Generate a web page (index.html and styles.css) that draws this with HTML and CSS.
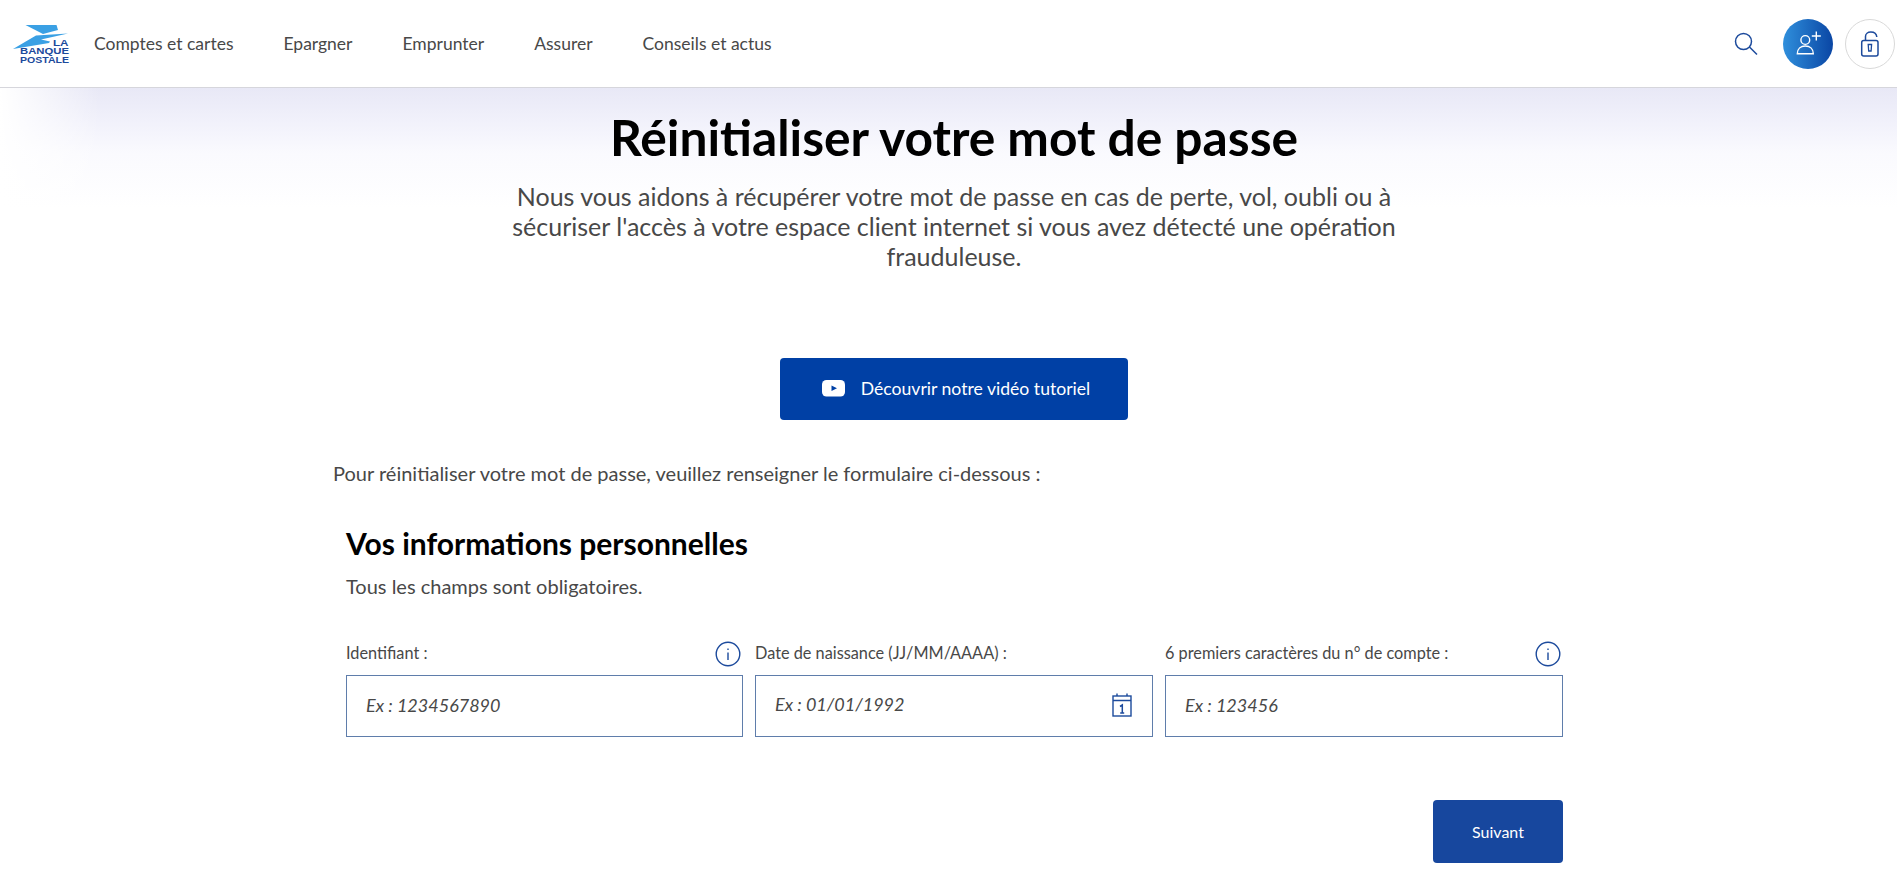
FILE: index.html
```html
<!DOCTYPE html>
<html lang="fr">
<head>
    <meta charset="UTF-8">
    <meta name="viewport" content="width=device-width, initial-scale=1.0">
    <title>Réinitialiser votre mot de passe</title>
    <link rel="stylesheet" href="styles.css">
</head>
<body>
    <!-- Header -->
    <header class="site-header">
        <a class="logo" href="#" aria-label="La Banque Postale">
            <svg width="57" height="42" viewBox="13 24 57 42">
                <path d="M25.5 25H56.5L58 30L43 34Z" fill="#3aa0e4"/>
                <path d="M68 33.5L36 35.5L13 49L49 43L50 41.5L41 39.5Z" fill="#3aa0e4"/>
                <g class="logo-text" fill="#1c4a9c">
                    <text x="53" y="45.5" textLength="15.5" lengthAdjust="spacingAndGlyphs">LA</text>
                    <text x="20" y="54" textLength="49" lengthAdjust="spacingAndGlyphs">BANQUE</text>
                    <text x="20" y="63" textLength="49" lengthAdjust="spacingAndGlyphs">POSTALE</text>
                </g>
            </svg>
        </a>
        <nav class="main-nav">
            <a href="#">Comptes et cartes</a>
            <a href="#">Epargner</a>
            <a href="#">Emprunter</a>
            <a href="#">Assurer</a>
            <a href="#">Conseils et actus</a>
        </nav>
        <div class="header-actions">
            <button class="search-btn" title="Rechercher">
                <svg width="24" height="24" viewBox="0 0 24 24" fill="none" stroke="#1c4a9c" stroke-width="1.5">
                    <circle cx="9.5" cy="9.5" r="8"/>
                    <path d="M15.5 15L23 22.5"/>
                </svg>
            </button>
            <button class="round-btn round-btn-blue" title="Devenir client">
                <svg width="34" height="34" viewBox="0 0 34 34" fill="none" stroke="#fff" stroke-width="1.4">
                    <circle cx="14.3" cy="13" r="4.4"/>
                    <path d="M6.3 26.8C6.3 21.8 9.8 19 14.3 19C18.8 19 22.3 21.8 22.3 26.8Z"/>
                    <path d="M20.8 9H29.8M25.3 4.5V13.5"/>
                </svg>
            </button>
            <button class="round-btn round-btn-white" title="Espace client">
                <svg width="22" height="30" viewBox="0 0 22 30" fill="none" stroke="#1c4a9c" stroke-width="1.5">
                    <rect x="2.7" y="11.5" width="16.3" height="15.5" rx="2"/>
                    <path d="M6.5 11V7.5C6.5 4.8 8.8 3 11.8 3C15 3 17.5 4.5 17.8 8"/>
                    <path d="M9.2 15.5H12.6L12.1 22H9.7Z" stroke-width="1.3"/>
                </svg>
            </button>
        </div>
    </header>

    <main class="page">
        <div class="hero">
            <h1>Réinitialiser votre mot de passe</h1>
            <p class="hero-text">Nous vous aidons à récupérer votre mot de passe en cas de perte, vol, oubli ou à sécuriser l'accès à votre espace client internet si vous avez détecté une opération frauduleuse.</p>
            <a class="video-btn" href="#">
                <svg width="24" height="17" viewBox="0 0 24 17">
                    <rect width="23" height="16.5" rx="4.5" fill="#fff"/>
                    <path d="M9.5 5.5L15 8.2L9.5 11Z" fill="#0040a5"/>
                </svg>
                Découvrir notre vidéo tutoriel
            </a>
        </div>

        <p class="intro">Pour réinitialiser votre mot de passe, veuillez renseigner le formulaire ci-dessous :</p>

        <form class="form-box">
            <h2>Vos informations personnelles</h2>
            <p class="form-note">Tous les champs sont obligatoires.</p>

            <div class="field-row">
                <div class="field">
                    <div class="field-label">
                        <label for="identifiant">Identifiant :</label>
                        <svg class="info-icon" width="26" height="26" viewBox="0 0 26 26" fill="none" stroke="#1c4a9c" stroke-width="1.4">
                            <circle cx="13" cy="13" r="11.8"/>
                            <path d="M13 11.5V19M13 7.5V9"/>
                        </svg>
                    </div>
                    <input id="identifiant" type="text" placeholder="Ex : 1234567890">
                </div>
                <div class="field">
                    <div class="field-label">
                        <label for="naissance">Date de naissance (JJ/MM/AAAA) :</label>
                    </div>
                    <div class="input-wrap">
                        <input class="input-date" id="naissance" type="text" placeholder="Ex : 01/01/1992">
                        <svg class="calendar-icon" width="20" height="24" viewBox="0 0 20 24" fill="none" stroke="#1c4a9c" stroke-width="1.4">
                            <rect x="1" y="3" width="18" height="20"/>
                            <path d="M1 7.5H19M5 .5V3M15 .5V3"/>
                            <path d="M8 13.5L10.3 12V20M8.2 20H12.2" stroke-width="1.5"/>
                        </svg>
                    </div>
                </div>
                <div class="field">
                    <div class="field-label">
                        <label for="compte">6 premiers caractères du n° de compte :</label>
                        <svg class="info-icon" width="26" height="26" viewBox="0 0 26 26" fill="none" stroke="#1c4a9c" stroke-width="1.4">
                            <circle cx="13" cy="13" r="11.8"/>
                            <path d="M13 11.5V19M13 7.5V9"/>
                        </svg>
                    </div>
                    <input id="compte" type="text" placeholder="Ex : 123456">
                </div>
            </div>

            <div class="form-actions">
                <button class="next-btn" type="button">Suivant</button>
            </div>
        </form>
    </main>
</body>
</html>
```

FILE: styles.css
```css
* {
    margin: 0;
    padding: 0;
    box-sizing: border-box;
}

body {
    font-family: 'Lato', 'Liberation Sans', sans-serif;
    background: white;
    color: #484848;
    height: 872px;
    overflow: hidden;
}

a {
    text-decoration: none;
    color: inherit;
}

.site-header {
    height: 88px;
    display: flex;
    align-items: center;
    padding: 0 2px 0 13px;
    background: white;
    border-bottom: 1px solid #d6d6dc;
}

.logo {
    display: flex;
    margin: 2px 24px 0 0;
}

.logo-text {
    font-family: 'Liberation Sans', sans-serif;
    font-weight: 700;
    font-size: 9.8px;
}

.main-nav {
    display: flex;
    gap: 50px;
    font-size: 17.5px;
    color: #484848;
}

.header-actions {
    margin-left: auto;
    display: flex;
    align-items: center;
}

.search-btn {
    background: none;
    border: none;
    display: flex;
    margin-right: 25px;
}

.round-btn {
    width: 50px;
    height: 50px;
    border-radius: 50%;
    display: flex;
    align-items: center;
    justify-content: center;
}

.round-btn-blue {
    border: none;
    background: linear-gradient(90deg, #2f8fdc 0%, #0a46a4 100%);
    margin-right: 12px;
}

.round-btn-white {
    border: 1px solid #d9d9d9;
    background: white;
}

.page {
    height: 784px;
    padding: 0 322px 0 333px;
    background:
        linear-gradient(90deg, white 0, rgba(255, 255, 255, 0) 100px),
        linear-gradient(180deg, #e8e8f6 0, #f1f1fb 33px, #fafafe 65px, white 120px);
    background-size: 100% 120px;
    background-repeat: no-repeat;
}

.hero {
    display: flex;
    flex-direction: column;
    align-items: center;
    text-align: center;
}

h1 {
    font-size: 49.7px;
    font-weight: 700;
    line-height: 58px;
    color: #000;
    margin-top: 20px;
}

.hero-text {
    width: 900px;
    font-size: 25px;
    line-height: 30.2px;
    margin-top: 15px;
}

.video-btn {
    width: 348px;
    height: 62px;
    margin-top: 86px;
    display: flex;
    align-items: center;
    justify-content: center;
    gap: 15px;
    padding-left: 4px;
    background: #0040a5;
    border-radius: 4px;
    color: white;
    font-size: 17.6px;
}

.intro {
    font-size: 20px;
    line-height: 26px;
    margin-top: 40px;
}

.form-box {
    padding: 0 12px 0 13px;
    margin-top: 38px;
}

h2 {
    font-size: 30px;
    font-weight: 700;
    line-height: 38px;
    color: #000;
}

.form-note {
    font-size: 20px;
    line-height: 26px;
    margin-top: 11px;
}

.field-row {
    display: grid;
    grid-template-columns: 397px 398px 398px;
    gap: 12px;
    margin-top: 42px;
}

.field-label {
    height: 34px;
    display: flex;
    justify-content: space-between;
    align-items: flex-start;
    font-size: 16.3px;
    line-height: 24px;
}

.info-icon {
    margin-right: 2px;
}

.input-wrap {
    position: relative;
}

.calendar-icon {
    position: absolute;
    top: 18px;
    right: 21px;
}

input {
    width: 100%;
    height: 62px;
    padding: 0 19px 1px;
    border: 1px solid #5f7dab;
    border-radius: 0;
    background: white;
    font-family: inherit;
    font-size: 18px;
    font-style: italic;
    color: #484848;
    outline: none;
}

.input-date {
    padding-bottom: 3px;
}

input::placeholder {
    color: #484848;
    opacity: 1;
}

.form-actions {
    display: flex;
    justify-content: flex-end;
    margin-top: 63px;
}

.next-btn {
    width: 130px;
    height: 63px;
    border: none;
    border-radius: 4px;
    background: #17479e;
    color: white;
    font-family: inherit;
    font-size: 16px;
}
```
